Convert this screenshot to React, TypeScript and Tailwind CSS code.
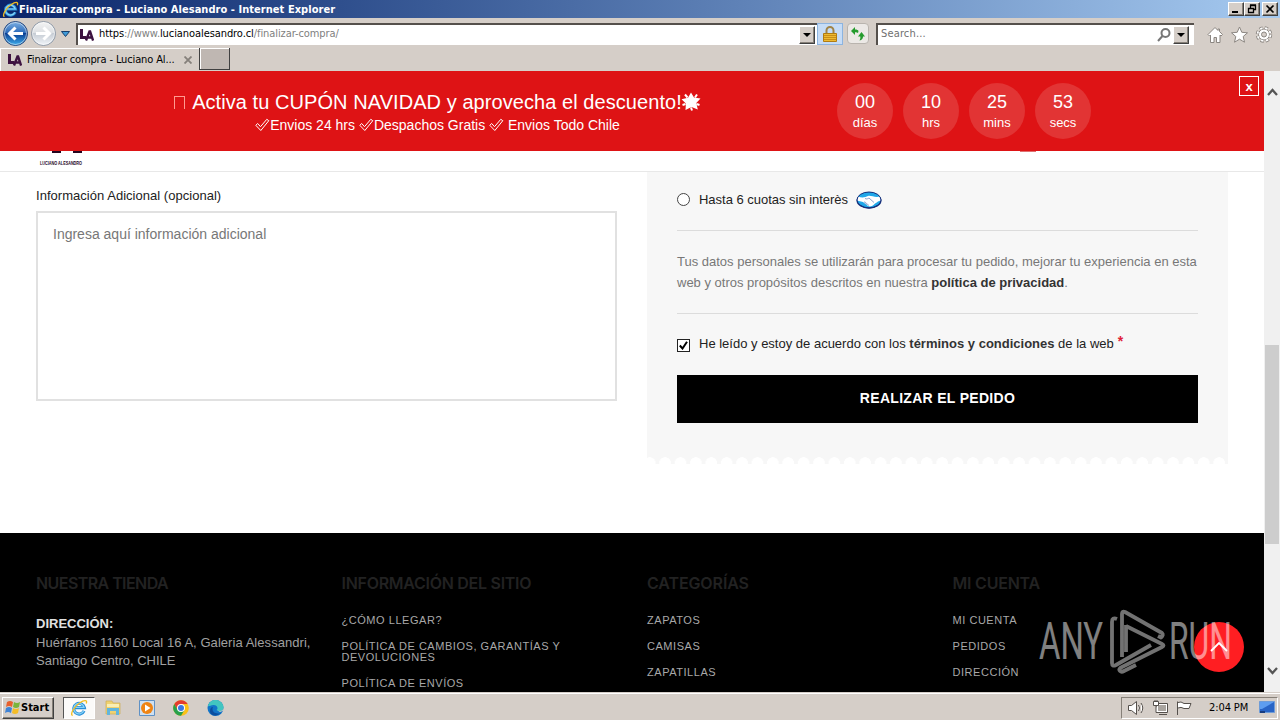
import type { ReactNode } from "react";

const countdown = [
  { value: "00", label: "días" },
  { value: "10", label: "hrs" },
  { value: "25", label: "mins" },
  { value: "53", label: "secs" },
];

const footerColumns = [
  {
    title: "INFORMACIÓN DEL SITIO",
    tracking: "tracking-[-0.28px]",
    links: ["¿CÓMO LLEGAR?", "POLÍTICA DE CAMBIOS, GARANTÍAS Y DEVOLUCIONES", "POLÍTICA DE ENVÍOS"],
  },
  { title: "CATEGORÍAS", tracking: "tracking-[-0.1px]", links: ["ZAPATOS", "CAMISAS", "ZAPATILLAS"] },
  { title: "MI CUENTA", tracking: "tracking-[-0.22px]", links: ["MI CUENTA", "PEDIDOS", "DIRECCIÓN"] },
];

const tahoma = "font-['DejaVu_Sans_Condensed','DejaVu_Sans',sans-serif]";
const raised =
  "border border-t-white border-l-white border-r-[#404040] border-b-[#404040] bg-[#d5cec8] shadow-[inset_-1px_-1px_0_#868078]";

function IeLogo({ size }: { size: number }) {
  return (
    <svg width={size} height={size} viewBox="0 0 20 20" fill="none" className="shrink-0">
      <path d="M15.6 13.2a6 6 0 1 1 .4-3.6H5.2" stroke="#2a8fd8" strokeWidth="3.4" />
      <path d="M15.2 13.2a5.8 5.8 0 1 1 .4-3.8H6" stroke="#86d2f6" strokeWidth="1.4" />
      <path d="M3 18.2C-.6 18 4.6 8 11 4.200 15.500 1 19.800.6 18 5" stroke="#f2bd22" strokeWidth="1.500" />
    </svg>
  );
}

function NavArrow({ forward }: { forward?: boolean }) {
  return (
    <svg width="27" height="27" viewBox="0 0 27 27" className="shrink-0">
      <defs>
        <linearGradient id={forward ? "fwd" : "back"} x1="0" y1="0" x2="0" y2="1">
          <stop offset="0" stopColor={forward ? "#f4f4f4" : "#7fb2e4"} />
          <stop offset=".48" stopColor={forward ? "#dcdfe3" : "#2a68b8"} />
          <stop offset=".5" stopColor={forward ? "#c6ccd4" : "#0c3f93"} />
          <stop offset="1" stopColor={forward ? "#f2f6fa" : "#3fb0ee"} />
        </linearGradient>
      </defs>
      <circle cx="13.500" cy="13.500" r="12" fill={forward ? "url(#fwd)" : "url(#back)"} stroke={forward ? "#8d98a6" : "#27497f"} />
      <circle cx="13.500" cy="13.500" r="11" fill="none" stroke="#fff" strokeOpacity=".5" />
      <path
        d={forward ? "M6 13.500h13M13.500 7.500l6 6-6 6" : "M21 13.500H8M13.500 7.500l-6 6 6 6"}
        fill="none"
        stroke="#fff"
        strokeWidth="3"
      />
    </svg>
  );
}

function SiteIcon() {
  return (
    <svg width="14" height="12" viewBox="0 0 14 12" fill="none" className="shrink-0">
      <path d="M1.500 0v8.500H6.500" stroke="#3d1240" strokeWidth="3" />
      <path d="M6 11.500 9.500 2.500h.6l3 9M7.500 8.500h4.500" stroke="#3d1240" strokeWidth="2.400" />
    </svg>
  );
}

function DropButton() {
  return (
    <span className={`flex h-[18px] w-4 items-center justify-center ${raised}`}>
      <svg width="8" height="4" viewBox="0 0 8 4">
        <path d="M0 0h8L4 4z" fill="#000" />
      </svg>
    </span>
  );
}

function WindowButton({ children }: { children: ReactNode }) {
  return (
    <span className={`flex h-[14px] w-4 items-center justify-center ${raised}`}>
      <svg width="12" height="10" viewBox="0 0 12 10" fill="none" stroke="#000">
        {children}
      </svg>
    </span>
  );
}

function TitleBar() {
  return (
    <div className="flex h-[18px] items-center bg-gradient-to-r from-[#0b246a] to-[#a6caf0] pr-[2px] pl-[2px]">
      <IeLogo size={17} />
      <span className={`${tahoma} flex-1 pt-px text-[11px] leading-4 font-bold whitespace-nowrap text-white`}>
        <span className="tracking-[0.045px]">Finalizar compra - Luciano Alesandro - Internet Explorer</span>
      </span>
      <WindowButton>
        <path d="M2 8h6" strokeWidth="2" />
      </WindowButton>
      <WindowButton>
        <path d="M4.500 4V1.500h5v4H8M4 1h6M2.500 4.500h5v4h-5zM2 4.500h6" strokeWidth="1.300" />
      </WindowButton>
      <span className="w-[2px]" />
      <WindowButton>
        <path d="m2.500 1.500 7 7m0-7-7 7" strokeWidth="1.700" />
      </WindowButton>
    </div>
  );
}

function Toolbar() {
  return (
    <div className={`${tahoma} flex h-[30px] items-center bg-[#d5cec8] pt-px pl-[2px] text-[11px]`}>
      <NavArrow />
      <span className="w-px" />
      <NavArrow forward />
      <svg width="9" height="6" viewBox="0 0 9 6" className="ml-[4px]">
        <path d="M.5.5h8l-4 5z" fill="#3f9bd8" stroke="#16406f" />
      </svg>
      <div className="ml-[6px] flex h-[22px] w-[741px] items-center border-t-2 border-l-2 border-t-[#55504c] border-l-[#55504c] bg-white pl-[2px]">
        <SiteIcon />
        <span className="ml-[5px] flex-1 tracking-[-0.08px] text-[#808080]">
          <span className="text-black">https</span>://www.<span className="text-black">lucianoalesandro.cl</span>
          /finalizar-compra/
        </span>
        <DropButton />
        <span className="w-[2px]" />
      </div>
      <span className="flex h-[22px] w-[26px] items-center justify-center border border-[#8cb4e0] bg-[#c6dcf6]">
        <svg width="14" height="16" viewBox="0 0 14 16">
          <path d="M3.500 8V4.500a3.500 3.500 0 0 1 7 0V8" fill="none" stroke="#a08448" strokeWidth="2" />
          <path d="M.5 7.500h13v8H.5z" fill="#eebb32" stroke="#b17c12" />
          <path d="M1 9.500h12M1 11.500h12M1 13.500h12" stroke="#c98e18" />
        </svg>
      </span>
      <span className="ml-1 flex h-[21px] w-[22px] items-center justify-center rounded-sm border border-[#b9b4ae] bg-[#ece9e6]">
        <svg width="14" height="14" viewBox="0 0 14 14" fill="#259b2d">
          <path d="M4 8 0 4 4 0v2.500c2 0 3 .5 3.500 1.500L7 6c-.5-.6-1.500-.8-3-.8z" />
          <path d="M10.500 5 14 9.500h-2c0 2-1 3.500-3.500 4 .8-1.200 1-2.500.8-4H7z" />
        </svg>
      </span>
      <div className="ml-[7px] flex h-[22px] w-[318px] items-center border-t-2 border-l-2 border-t-[#55504c] border-l-[#55504c] bg-white pl-[3px]">
        <span className="flex-1 tracking-[0.15px] text-[#707070]">Search...</span>
        <svg width="14" height="14" viewBox="0 0 14 14" fill="none" stroke="#777" strokeWidth="2">
          <circle cx="8.500" cy="5" r="4" />
          <path d="M5.500 8 1 13" />
        </svg>
        <span className="w-[2px]" />
        <DropButton />
        <span className="w-[5px]" />
      </div>
      <svg width="66" height="18" viewBox="0 0 66 18" className="mt-[3px] ml-[13px]" fill="#fff" stroke="#8b8681">
        <path d="M8 1.500 1 8.500l1.500 1.500L3.500 9v7.500h3.500v-5h2.500v5H13V9l1 1 1.500-1.500-3-3V3h-1.500v1.500z" />
        <path d="m32.500 1 2.300 5.300 5.700.5-4.300 3.700 1.300 5.700-5-3-5 3 1.300-5.700-4.300-3.700 5.700-.5z" />
        <circle cx="57" cy="8.500" r="6.500" fill="none" stroke="#8b8681" strokeWidth="3.500" strokeDasharray="3.100 2" />
        <circle cx="57" cy="8.500" r="5.500" stroke="#8b8681" />
        <circle cx="57" cy="8.500" r="6.500" fill="none" stroke="#fff" strokeWidth="1.800" strokeDasharray="2.400 2.700" strokeDashoffset="-.4" />
        <circle cx="57" cy="8.500" r="2.500" fill="#d5cec8" />
      </svg>
    </div>
  );
}

function TabRow() {
  return (
    <div className={`${tahoma} flex h-[23px] bg-[#d5cec8] text-[11px] text-black`}>
      <div className="flex w-[199px] items-center border-t border-l border-white pl-[7px]">
        <SiteIcon />
        <span className="ml-[5px] pt-px tracking-[-0.13px] whitespace-nowrap">Finalizar compra - Luciano Al...</span>
        <svg width="8" height="8" viewBox="0 0 8 8" className="ml-auto mr-[7px]" stroke="#85807b" strokeWidth="1.800">
          <path d="m.5.5 7 7m0-7-7 7" />
        </svg>
      </div>
      <div className="h-[22px] w-[31px] border-r border-b border-l border-r-[#404040] border-b-[#404040] border-l-[#404040] bg-[#bfb7b2] shadow-[inset_1px_1px_0_#fff]" />
    </div>
  );
}

function CheckGlyph() {
  return (
    <svg width="15" height="14" viewBox="0 0 15 13" fill="none" stroke="#fff">
      <path d="M.8 6.800 2.700 5l2.800 3.200L11.800.8l2 1.400L5.800 12z" />
    </svg>
  );
}

function Banner() {
  return (
    <div className="flex h-20 bg-[#de1315] text-white">
      <div className="ml-[174px] flex w-[527px] flex-col items-center pt-[19px] whitespace-nowrap">
        <div className="flex h-6 items-center text-xl leading-6">
          <span className="mr-[7px] h-[13px] w-[11px] border border-b-0 border-[#ff9a90]" />
          <span className="tracking-[0.065px]">Activa tu CUPÓN NAVIDAD y aprovecha el descuento!</span>
          <svg width="20" height="20" viewBox="0 0 20 20" fill="#fff" className="-ml-px">
            <path d="m10 .5 3 5 6.500.9-4.200 4.600 1.500 6.500-6.300-2.500L4.500 18l.4-6.500L.5 7.200l6.500-1.400z" />
            <g stroke="#fff" strokeWidth="2">
              <path d="m4 2.500 2.500 3M16 2.500l-2 3M18.500 13l-3-1M11 18.500l-1-3M1.500 13l3-1" />
            </g>
          </svg>
        </div>
        <div className="flex h-[22px] items-center text-sm">
          <CheckGlyph />
          <span>Envios 24 hrs&nbsp;</span>
          <CheckGlyph />
          <span>Despachos Gratis&nbsp;</span>
          <CheckGlyph />
          <span>&nbsp;Envios Todo Chile</span>
        </div>
      </div>
      <div className="ml-[136px] flex gap-[10px] pt-3">
        {countdown.map((item) => (
          <div key={item.label} className="flex h-14 w-14 flex-col items-center rounded-full bg-[#e23434] pt-[9px]">
            <span className="text-lg leading-5">{item.value}</span>
            <span className="pt-px text-[13px] leading-5">{item.label}</span>
          </div>
        ))}
      </div>
      <button className="mt-[5px] mr-[5px] ml-auto h-5 w-5 border border-white text-[13px] leading-[17px] font-bold">x</button>
    </div>
  );
}

function StickyHeader() {
  return (
    <div className="flex h-[21px] justify-between border-b border-[#e8e8e8] bg-white pr-[228px] pl-[39px]">
      <svg width="50" height="20" viewBox="0 0 50 20">
        <path d="M13 0h9v2h-9zM34 0h9v2h-9z" fill="#25061f" />
        <text x="1" y="14" fontSize="5" fontWeight="bold" fill="#25061f" textLength="42" lengthAdjust="spacingAndGlyphs">
          LUCIANO ALESANDRO
        </text>
      </svg>
      <span className="h-px w-4 bg-[#e07070]" />
    </div>
  );
}

function HandshakeLogo() {
  return (
    <svg width="26" height="18" viewBox="0 0 26 18">
      <ellipse cx="13" cy="9.500" rx="12.500" ry="8.300" fill="#17307c" />
      <ellipse cx="13" cy="8.600" rx="11.700" ry="7.700" fill="#20a7e8" />
      <path d="M2 5.500c4 1.500 7 1 10-.5 3-.8 7 2 12 .5l1 4c-3 .5-4 2-6 3-2 2.500-5 3.500-7 2.500L7 11 1 9.500z" fill="#fff" />
      <path d="M9 7.500c2 1 3 0 4-.5l5 4.500M8 11c2 0 2 1 2 2 2 0 2 1 3 1.500" fill="none" stroke="#5a78b8" strokeWidth=".7" />
      <ellipse cx="13" cy="9" rx="12" ry="8" fill="none" stroke="#17307c" />
    </svg>
  );
}

function Checkout() {
  return (
    <main className="flex h-[361px] bg-white pl-9 text-[13px] text-[#222]">
      <div className="w-[581px]">
        <label className="mt-[13px] block h-[26px] leading-[21px]">
          <span className="tracking-[0.03px]">Información Adicional (opcional)</span>
        </label>
        <div className="h-[190px] border-2 border-[#e1e1e1] px-[15px] pt-[11px] text-sm leading-5 text-[#777]">
          Ingresa aquí información adicional
        </div>
      </div>
      <div className="ml-[30px] w-[581px]">
        <div className="h-[285px] bg-[#f7f7f7] px-[30px]">
          <div className="flex h-[59px] items-center border-b border-[#dcdcdc] pb-[2px]">
            <span className="mb-px h-[13px] w-[13px] rounded-full border border-[#444] bg-white" />
            <span className="mr-2 ml-[9px] tracking-[-0.02px]">Hasta 6 cuotas sin interès</span>
            <HandshakeLogo />
          </div>
          <p className="h-[83px] border-b border-[#dcdcdc] pt-5 leading-[21px] whitespace-nowrap text-[#777]">
            Tus datos personales se utilizarán para procesar tu pedido, mejorar tu experiencia en esta
            <br />
            web y otros propósitos descritos en nuestra <b className="text-[#333]">política de privacidad</b>.
          </p>
          <div className="flex h-[61px] pt-[19px] leading-[21px]">
            <span className="mt-[6px] mr-[9px] flex h-[13px] w-[13px] items-center justify-center border border-[#222] bg-white">
              <svg width="9" height="9" viewBox="0 0 9 9" fill="none" stroke="#000" strokeWidth="2">
                <path d="m.8 4.500 2.700 3L8 .8" />
              </svg>
            </span>
            <span>
              He leído y estoy de acuerdo con los <b className="text-[#333]">términos y condiciones</b> de la web
            </span>
            <span className="ml-1 text-sm leading-[17px] font-bold text-[#e0203a]">*</span>
          </div>
          <button className="block h-12 w-full bg-black pb-[2px] text-sm font-bold tracking-[0.3px] text-white">
            REALIZAR EL PEDIDO
          </button>
        </div>
        <div className="h-[7px] bg-[#f7f7f7] bg-[radial-gradient(circle_at_50%_6px,#fff_5.500px,transparent_6px)] bg-[length:15.400px_14px] bg-[position:-5px_0]" />
      </div>
    </main>
  );
}

function FooterTitle({ tracking, children }: { tracking: string; children: ReactNode }) {
  return (
    <h5 className={`font-['Inter','Open_Sans',sans-serif] text-base leading-6 font-semibold whitespace-nowrap text-[#222] ${tracking}`}>
      {children}
    </h5>
  );
}

function Footer() {
  return (
    <footer className="flex h-[159px] overflow-hidden bg-black pt-[38px] pl-9">
      <div className="w-[305.500px] shrink-0">
        <FooterTitle tracking="tracking-[-0.57px]">NUESTRA TIENDA</FooterTitle>
        <p className="mt-[19px] text-[13px] leading-[18px] whitespace-nowrap text-[#a0a0a0]">
          <b className="block h-5 leading-5 text-[#e0e0e0]">DIRECCIÓN:</b>
          <span className="tracking-[0.05px]">Huérfanos 1160 Local 16 A, Galeria Alessandri,</span>
          <br />
          Santiago Centro, CHILE
        </p>
      </div>
      {footerColumns.map((column) => (
        <div key={column.title} className="w-[305.500px] shrink-0">
          <FooterTitle tracking={column.tracking}>{column.title}</FooterTitle>
          <ul className="mt-5 flex flex-col gap-[15px] text-[11px] leading-[11px] text-[#a8a8a8]">
            {column.links.map((link) => (
              <li key={link} className="w-[240px] tracking-[0.54px]">
                {link}
              </li>
            ))}
          </ul>
        </div>
      ))}
    </footer>
  );
}

// Scroll-to-top button with the recorder's mark laid over it
function FloatingMarks() {
  return (
    <>
      <div className="absolute right-[20px] bottom-[20px] flex h-[50px] w-[50px] items-center justify-center rounded-full bg-[#ff1e22]">
        <svg width="18" height="10" viewBox="0 0 18 10" fill="none" stroke="#fff" strokeWidth="1.800">
          <path d="m1 9 8-8 8 8" />
        </svg>
      </div>
      <svg width="200" height="66" viewBox="0 0 200 66" className="absolute right-[28px] bottom-[18px] opacity-50">
        <g fill="#fff" fontFamily="Roboto, sans-serif" fontWeight="400" fontSize="51">
          <text x="3" y="51" textLength="64" lengthAdjust="spacingAndGlyphs">ANY</text>
          <text x="133" y="51" textLength="63" lengthAdjust="spacingAndGlyphs">RUN</text>
        </g>
        <g fill="none" stroke="#e4e4e4" strokeWidth="3.800" strokeLinejoin="round">
          <path d="M86 49V6q0-3.500 3-2L126 25q2 2-1 4.500l-3-1.500" />
          <path d="M81 11q-5-2-5 3v41q0 4 4 2l35-20" />
          <path d="M90 17v27M90 18l36 18q3 1.500 0 3L86 59q-4 2-2 4 1.500 1.500 4 0l12-6" />
        </g>
      </svg>
    </>
  );
}

function Scrollbar() {
  return (
    <div className="flex w-4 flex-col items-center bg-[#f0f0f0]">
      <svg width="11" height="8" viewBox="0 0 11 8" className="mt-[17px]" fill="none" stroke="#555" strokeWidth="2.300">
        <path d="m1 7 4.500-5L10 7" />
      </svg>
      <div className="mt-[249px] h-[199px] w-[14px] bg-[#cdcdcd]" />
      <svg width="11" height="8" viewBox="0 0 11 8" className="mt-auto mb-[17px]" fill="none" stroke="#555" strokeWidth="2.300">
        <path d="m1 1 4.500 5L10 1" />
      </svg>
    </div>
  );
}

function Taskbar() {
  return (
    <div className={`${tahoma} flex h-7 items-center border-t border-[#d5cec8] bg-[#d5cec8] pl-[2px] text-[11px] text-black shadow-[inset_0_1px_0_#fff]`}>
      <button className={`mt-[2px] flex h-[22px] w-[52px] items-center pl-[2px] ${raised}`}>
        <svg width="16" height="15" viewBox="0 0 16 15">
          <path d="M2 2q3-2 6 0L7 7Q4 5 1 7z" fill="#e8602d" />
          <path d="M9 2q3 2 6 0l-1 5q-3 2-6 0z" fill="#7ab53c" />
          <path d="M1 8q3-2 6 0l-1 5q-3-2-6 0z" fill="#3f83d6" />
          <path d="M8 8q3 2 6 0l-1 5q-3 2-6 0z" fill="#f4bd28" />
        </svg>
        <b className="pt-px">Start</b>
      </button>
      <div className="mt-[2px] ml-[9px] flex h-[22px] w-8 items-center justify-center border border-t-[#555] border-r-white border-b-white border-l-[#555] bg-[#fbfaf9]">
        <IeLogo size={18} />
      </div>
      <div className="mt-[2px] ml-[10px] flex items-center gap-[18px]">
        <svg width="16" height="17" viewBox="0 0 16 17">
          <path d="M1 2h6l1 2h7v11H1z" fill="#efd271" stroke="#cfae55" strokeWidth=".7" />
          <path d="M2 5h12v3H2z" fill="#faeeb3" />
          <path d="M2 9h12v7h-3v-4H5v4H2z" fill="#62b5dd" />
        </svg>
        <svg width="16" height="16" viewBox="0 0 16 16">
          <path d="M.5.5h15v15H.5z" fill="#cfe0f1" stroke="#5f91c5" />
          <circle cx="8" cy="8" r="6" fill="#ef8414" />
          <path d="m6 4.500 5.500 3.500L6 11.500z" fill="#fff" />
        </svg>
        <svg width="16" height="16" viewBox="0 0 16 16">
          <circle cx="8" cy="8" r="7.800" fill="#fbc116" />
          <path d="M1.300 4A7.800 7.800 0 0 1 14.700 4H8L4.700 10z" fill="#e33b2e" />
          <path d="M1.300 4A7.800 7.800 0 0 0 8 15.800L11.500 10H4.700z" fill="#28a04b" />
          <circle cx="8" cy="8" r="4" fill="#fff" />
          <circle cx="8" cy="8" r="3" fill="#3b78e0" />
        </svg>
        <svg width="17" height="16" viewBox="0 0 17 16">
          <circle cx="8.500" cy="8" r="8" fill="#1274c8" />
          <path d="M1 6C3-2 15-2 16.500 7c.3 4-4 5-7 3 2-1 1-5-3-5-3 0-5 2-5.500 1z" fill="#42c5c0" />
          <path d="M10 10c3 2 6 1 6.500-2 .5 3-2 4-4 3.800z" fill="#d5cec8" />
          <path d="M6 7c-2 4 2 8 8 6-4 4-11 3-11-2 0-2 1-4 3-4z" fill="#0c4d9e" />
        </svg>
      </div>
      <div className="mt-[2px] mr-[2px] ml-auto flex h-[22px] w-[157px] items-center border border-t-[#868078] border-r-white border-b-white border-l-[#868078] pl-[6px]">
        <svg width="66" height="16" viewBox="0 0 66 16" fill="#fff" stroke="#55504c">
          <path d="M.5 5.500h3l5-4v13l-5-4h-3zM10.500 5q2 3 0 6M13 3q3.500 5 0 10" />
          <path d="M28.500 3.500h11v9h-11zM31 14.500h8" />
          <path d="M30 5h8v6h-8z" fill="#a9a49f" stroke="none" />
          <path d="M25.500 1.500h5v4h-5zM28 5.500v7h3M27 0v2M29 0v2" />
          <path d="M49.500 15V1.500M50 2.500q3-1.500 6 1h7l-2 5h-5q-3-2-6-.5" />
        </svg>
        <span className="ml-[15px] pt-px tracking-[-0.1px] whitespace-nowrap">2:04 PM</span>
        <svg width="16" height="13" viewBox="0 0 16 13" className="mr-[2px] ml-auto">
          <path d="M.5.500h15v11H.5z" fill="#2864c6" stroke="#6e9cd8" />
          <path d="M1 1h14L3 8H1z" fill="#5d9df0" />
          <path d="M1 10h5v2H1z" fill="#173c80" />
        </svg>
      </div>
    </div>
  );
}

export default function App() {
  return (
    <div className="flex h-[720px] w-[1280px] flex-col overflow-hidden font-['Liberation_Sans',Arial,sans-serif]">
      <TitleBar />
      <Toolbar />
      <TabRow />
      <div className="flex h-[621px]">
        <div className="relative w-[1264px]">
          <Banner />
          <StickyHeader />
          <Checkout />
          <Footer />
          <FloatingMarks />
        </div>
        <Scrollbar />
      </div>
      <Taskbar />
    </div>
  );
}
